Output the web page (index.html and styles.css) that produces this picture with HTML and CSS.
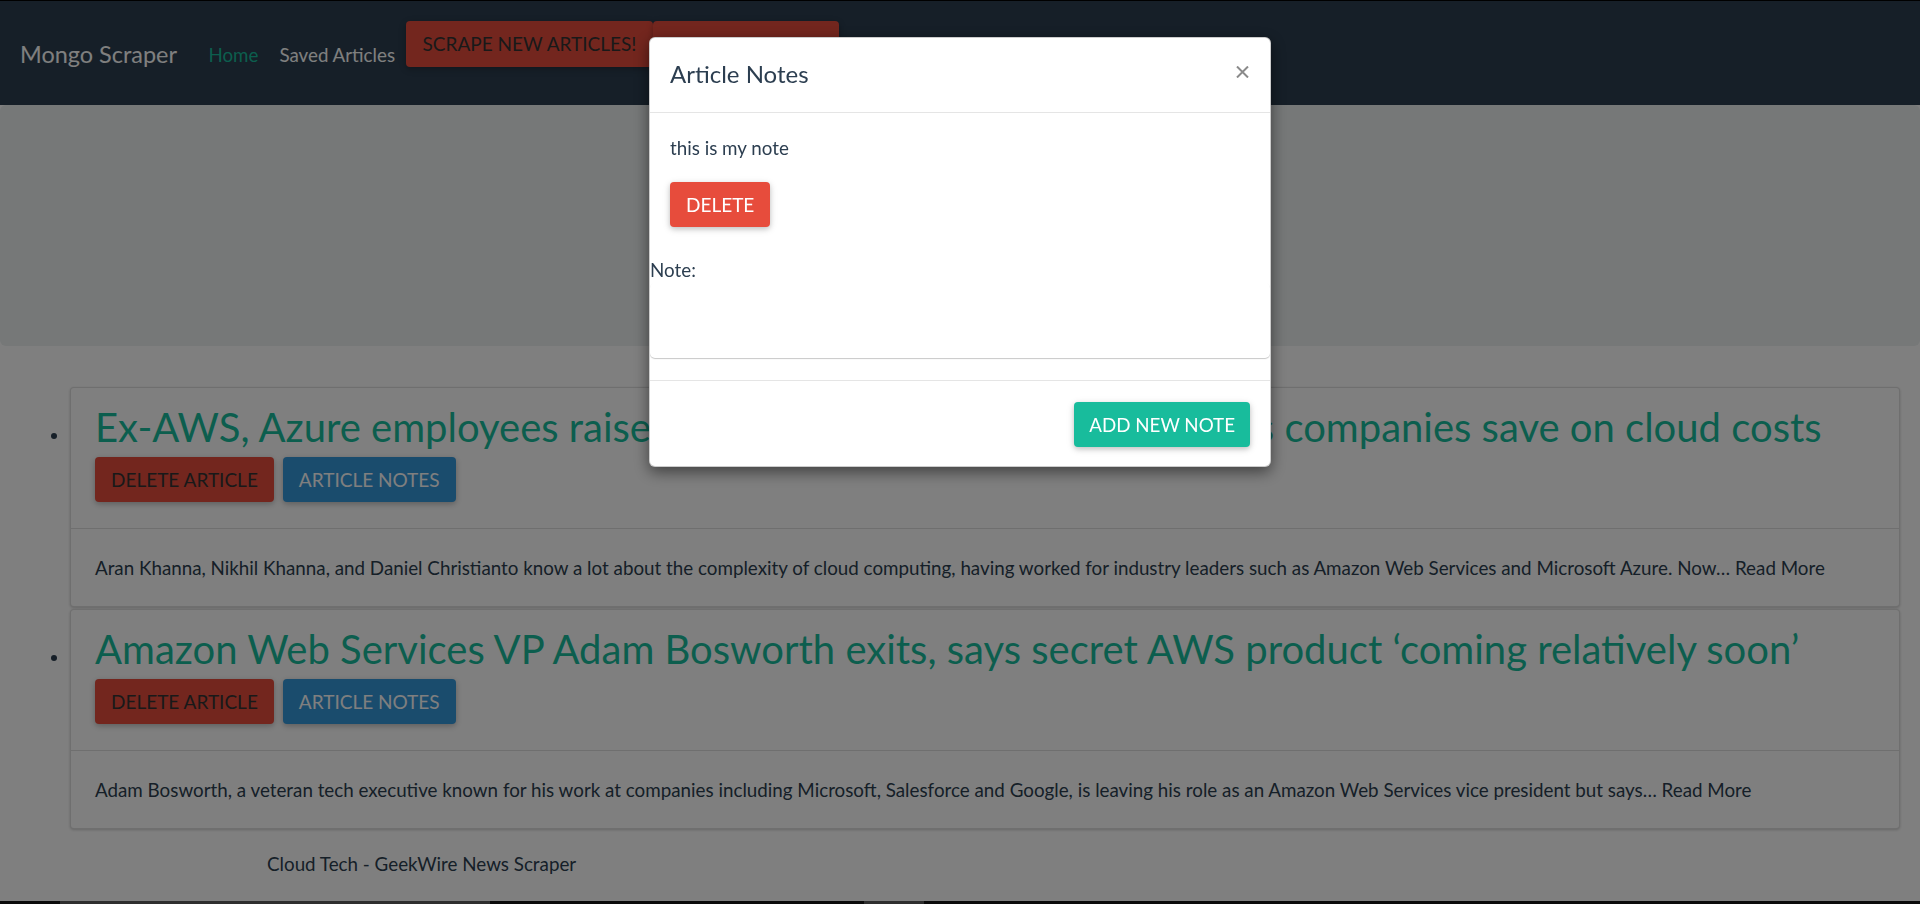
FILE: index.html
```html
<!DOCTYPE html>
<html lang="en">
<head>
<meta charset="utf-8">
<title>Mongo Scraper</title>
<link rel="stylesheet" href="styles.css">
</head>
<body>
<nav class="navbar">
  <a class="brand" href="#">Mongo Scraper</a>
  <ul class="nav-links">
    <li><a class="nav-link active" href="#">Home</a></li>
    <li><a class="nav-link" href="#">Saved Articles</a></li>
  </ul>
  <div class="nav-actions">
    <button class="btn btn-danger btn-dark-text">Scrape New Articles!</button>
    <button class="btn btn-danger btn-dark-text">Clear Articles!</button>
  </div>
</nav>

<header class="jumbotron">
  <h1 class="jumbo-title">Mongo Scraper</h1>
  <p class="jumbo-sub">Saved Articles</p>
</header>

<ul class="articles">
  <li class="article-item">
    <div class="card">
      <div class="card-header">
        <h2 class="article-title">Ex-AWS, Azure employees raise $2.5M for Reserved.ai, which helps companies save on cloud costs</h2>
        <div class="btn-row">
          <button class="btn btn-danger btn-dark-text">Delete Article</button>
          <button class="btn btn-info">Article Notes</button>
        </div>
      </div>
      <div class="card-body">
        <p class="summary">Aran Khanna, Nikhil Khanna, and Daniel Christianto know a lot about the complexity of cloud computing, having worked for industry leaders such as Amazon Web Services and Microsoft Azure. Now… <a class="read-more" href="#">Read More</a></p>
      </div>
    </div>
  </li>
  <li class="article-item">
    <div class="card">
      <div class="card-header">
        <h2 class="article-title">Amazon Web Services VP Adam Bosworth exits, says secret AWS product ‘coming relatively soon’</h2>
        <div class="btn-row">
          <button class="btn btn-danger btn-dark-text">Delete Article</button>
          <button class="btn btn-info">Article Notes</button>
        </div>
      </div>
      <div class="card-body">
        <p class="summary">Adam Bosworth, a veteran tech executive known for his work at companies including Microsoft, Salesforce and Google, is leaving his role as an Amazon Web Services vice president but says… <a class="read-more" href="#">Read More</a></p>
      </div>
    </div>
  </li>
</ul>

<footer class="page-footer">Cloud Tech - GeekWire News Scraper</footer>
<div class="bottom-strip">
  <span class="seg seg-dark w60"></span>
  <span class="seg seg-grey w430"></span>
  <span class="seg seg-dark w374"></span>
  <span class="seg seg-grey w60"></span>
  <span class="seg seg-dark grow"></span>
</div>

<div class="backdrop"></div>

<div class="modal">
  <div class="modal-dialog">
    <div class="modal-header">
      <h4 class="modal-title">Article Notes</h4>
      <button class="close" aria-label="Close">
        <svg width="13" height="12" viewBox="0 0 13 12"><path d="M1 0.5 L12 11.5 M12 0.5 L1 11.5" stroke="#8a8a8a" stroke-width="2" fill="none"/></svg>
      </button>
    </div>
    <div class="modal-body">
      <p class="note-text">this is my note</p>
      <button class="btn btn-danger">Delete</button>
    </div>
    <form class="note-form">
      <label class="note-label" for="note">Note:</label>
      <textarea class="note-input" id="note"></textarea>
    </form>
    <div class="modal-footer">
      <button class="btn btn-success btn-compact">Add New Note</button>
    </div>
  </div>
</div>
</body>
</html>
```

FILE: styles.css
```css
* { box-sizing: border-box; }

html, body {
  margin: 0;
  padding: 0;
  height: 904px;
  overflow: hidden;
}

body {
  font-family: Lato, "Open Sans", "Liberation Sans", sans-serif;
  font-size: 18.8px;
  line-height: 27px;
  color: #2c3e50;
  background: #ffffff;
}

a { text-decoration: none; color: inherit; }

/* Buttons */
.btn {
  font-family: Lato, "Liberation Sans", sans-serif;
  font-size: 19px;
  text-transform: uppercase;
  height: 45px;
  line-height: 45px;
  padding: 0 16px;
  border: none;
  border-radius: 4px;
  color: #ffffff;
  cursor: pointer;
  box-shadow: 0 2px 5px rgba(0,0,0,0.16), 0 2px 8px rgba(0,0,0,0.12);
  white-space: nowrap;
}
.btn-danger { background: #e74c3c; }
.btn-info { background: #3498db; }
.btn-success { background: #18bc9c; }
.btn-dark-text { color: #333333; }
.btn-compact { font-size: 18.75px; padding: 0 15px; }

/* Navbar */
.navbar {
  height: 105px;
  background: #2c3e50;
  border-top: 1px solid #000000;
  display: flex;
  align-items: flex-start;
  padding-left: 20px;
}
.brand {
  color: #ffffff;
  font-size: 23.44px;
  line-height: 30px;
  margin-top: 38px;
  margin-right: 21px;
}
.nav-links {
  list-style: none;
  margin: 40px 0 0 0;
  padding: 0;
  display: flex;
}
.nav-link {
  display: block;
  color: #ffffff;
  font-size: 18.75px;
  line-height: 27px;
  padding: 0 10.5px;
}
.nav-link.active { color: #18bc9c; }
.nav-actions {
  display: flex;
  margin-top: 20px;
}
.nav-actions .btn { height: 46px; line-height: 46px; padding: 0 17px; }

/* Jumbotron */
.jumbotron {
  height: 241px;
  background: #ecf0f1;
  border-radius: 6px;
  text-align: center;
  padding-top: 60px;
}
.jumbo-title {
  margin: 0;
  font-size: 56px;
  line-height: 64px;
  font-weight: 400;
}
.jumbo-sub { margin: 10px 0 0; }

/* Articles */
.articles {
  margin: 41px 0 0 0;
  padding: 0 20px 0 70px;
  list-style: disc;
}
.article-item { margin-bottom: 2px; }
.card {
  background: #ffffff;
  border: 1px solid rgba(0,0,0,0.13);
  border-radius: 4px;
  box-shadow: 0 1px 3px rgba(0,0,0,0.2);
}
.card-header {
  padding: 17px 24px 26px;
}
.article-title {
  margin: 0 0 8px;
  font-size: 40px;
  line-height: 44px;
  font-weight: 400;
  color: #18bc9c;
  white-space: nowrap;
}
.btn-row {
  display: flex;
  gap: 9px;
}
.card-body {
  border-top: 1px solid rgba(0,0,0,0.13);
  padding: 25px 24px;
}
.summary { margin: 0; }

/* Footer */
.page-footer {
  margin-top: 21px;
  padding-left: 267px;
  line-height: 27px;
}
.bottom-strip {
  margin-top: 24px;
  height: 3px;
  display: flex;
}
.seg { display: block; height: 100%; }
.seg-dark { background: #141414; }
.seg-grey { background: #5c5c5c; }
.w60 { width: 60px; }
.w430 { width: 430px; }
.w374 { width: 374px; }
.grow { flex: 1; }

/* Modal */
.backdrop {
  position: fixed;
  inset: 0;
  background: rgba(0,0,0,0.5);
}
.modal {
  position: fixed;
  inset: 0;
}
.modal-dialog {
  width: 622px;
  margin: 37px auto 0;
  background: #ffffff;
  border: 1px solid rgba(0,0,0,0.2);
  border-radius: 6px;
  box-shadow: 0 5px 15px rgba(0,0,0,0.5);
  overflow: hidden;
}
.modal-header {
  display: flex;
  justify-content: space-between;
  align-items: flex-start;
  padding: 18px 21px 20px 20px;
  border-bottom: 1px solid #e5e5e5;
}
.modal-title {
  margin: 0;
  font-size: 24px;
  line-height: 36px;
  font-weight: 400;
  color: #2c3e50;
}
.close {
  background: none;
  border: none;
  padding: 0;
  margin-top: 10px;
  width: 13px;
  height: 12px;
  display: flex;
  cursor: pointer;
}
.modal-body {
  padding: 21px 20px 20px;
}
.note-text { margin: 0 0 21px; }
.note-form {
  margin: 0;
  padding-top: 9px;
}
.note-label {
  display: block;
  line-height: 27px;
}
.note-input {
  display: block;
  width: 100%;
  height: 75px;
  border: none;
  border-radius: 5px;
  resize: none;
  box-shadow: 0 1px 1px rgba(0,0,0,0.22);
  font-family: inherit;
  font-size: 18.75px;
  margin-bottom: 22px;
}
.modal-footer {
  border-top: 1px solid #e5e5e5;
  padding: 21px 20px 19px;
  display: flex;
  justify-content: flex-end;
}
```
